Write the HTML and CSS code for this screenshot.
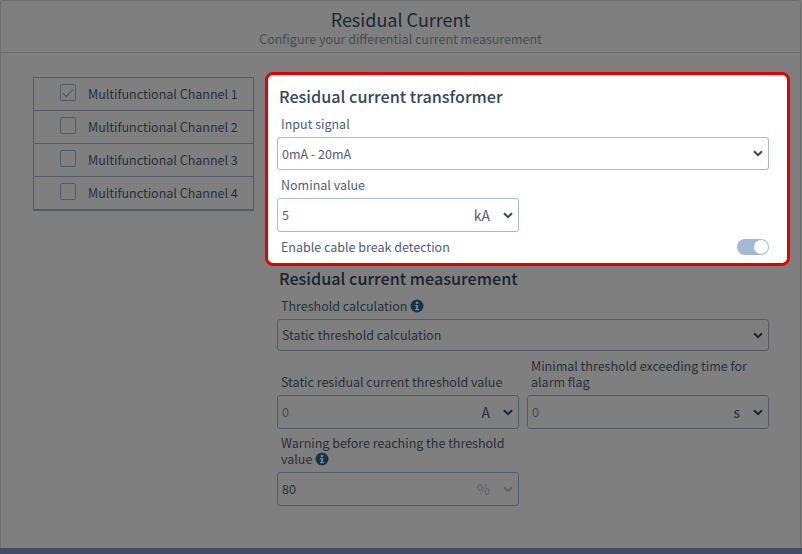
FILE: index.html
```html
<!DOCTYPE html>
<html lang="en">
<head>
<meta charset="utf-8">
<title>Residual Current</title>
<link rel="stylesheet" href="styles.css">
</head>
<body>
<div class="page">
  <div class="panel">
    <header class="head">
      <h1 class="head-title">Residual Current</h1>
      <p class="head-sub">Configure your differential current measurement</p>
    </header>
    <div class="body">
      <ul class="channels">
        <li class="channel"><span class="check"><svg viewBox="0 0 16 16" width="14" height="14"><path d="M2.5 8.5 6.2 12 13.5 4" fill="none" stroke="#8fa6c0" stroke-width="1.2"/></svg></span>Multifunctional Channel 1</li>
        <li class="channel"><span class="check"></span>Multifunctional Channel 2</li>
        <li class="channel"><span class="check"></span>Multifunctional Channel 3</li>
        <li class="channel"><span class="check"></span>Multifunctional Channel 4</li>
      </ul>
      <div class="forms">
        <section class="card">
          <h2 class="sec-title">Residual current transformer</h2>
          <label class="lab lab-first">Input signal</label>
          <div class="field f-33"><span class="val">0mA - 20mA</span><svg class="chev" viewBox="0 0 10 7" width="10" height="7"><path d="M1 1.2 5 5.2 9 1.2" fill="none" stroke="#34485f" stroke-width="2"/></svg></div>
          <label class="lab lab-gap">Nominal value</label>
          <div class="field half f-34"><span class="val">5</span><span class="unit">kA</span><svg class="chev" viewBox="0 0 10 7" width="10" height="7"><path d="M1 1.2 5 5.2 9 1.2" fill="none" stroke="#34485f" stroke-width="2"/></svg></div>
          <div class="switch-row"><span class="lab-inline">Enable cable break detection</span><span class="toggle"><span class="knob"></span></span></div>
        </section>
        <section class="plain">
          <h2 class="sec-title">Residual current measurement</h2>
          <label class="lab lab-first">Threshold calculation <svg class="info" viewBox="0 0 14 14" width="14" height="14"><circle cx="7" cy="7" r="6.5" fill="#2f6496"/><rect x="5.8" y="2.8" width="2.4" height="2.2" fill="#fff"/><path d="M5 6h3.1v4h1v1.3H5V10h1V7.3H5z" fill="#fff"/></svg></label>
          <div class="field f-32"><span class="val">Static threshold calculation</span><svg class="chev" viewBox="0 0 10 7" width="10" height="7"><path d="M1 1.2 5 5.2 9 1.2" fill="none" stroke="#34485f" stroke-width="2"/></svg></div>
          <div class="cols">
            <div class="col">
              <label class="lab">Static residual current threshold value</label>
              <div class="field f-34"><span class="val faint">0</span><span class="unit">A</span><svg class="chev" viewBox="0 0 10 7" width="10" height="7"><path d="M1 1.2 5 5.2 9 1.2" fill="none" stroke="#34485f" stroke-width="2"/></svg></div>
            </div>
            <div class="col">
              <label class="lab">Minimal threshold exceeding time for alarm flag</label>
              <div class="field f-34"><span class="val faint">0</span><span class="unit">s</span><svg class="chev" viewBox="0 0 10 7" width="10" height="7"><path d="M1 1.2 5 5.2 9 1.2" fill="none" stroke="#34485f" stroke-width="2"/></svg></div>
            </div>
          </div>
          <div class="cols cols-last">
            <div class="col">
              <label class="lab">Warning before reaching the threshold value <svg class="info" viewBox="0 0 14 14" width="14" height="14"><circle cx="7" cy="7" r="6.5" fill="#2f6496"/><rect x="5.8" y="2.8" width="2.4" height="2.2" fill="#fff"/><path d="M5 6h3.1v4h1v1.3H5V10h1V7.3H5z" fill="#fff"/></svg></label>
              <div class="field f-34"><span class="val">80</span><span class="unit muted">%</span><svg class="chev" viewBox="0 0 10 7" width="10" height="7"><path d="M1 1.2 5 5.2 9 1.2" fill="none" stroke="#b9c4d0" stroke-width="2"/></svg></div>
            </div>
          </div>
        </section>
      </div>
    </div>
  </div>
  <footer class="foot"></footer>
  <div class="overlay"></div>
</div>
</body>
</html>
```
FILE: styles.css
```css
* { box-sizing: border-box; }
html, body { margin: 0; height: 100%; }
body {
  font-family: "Noto Sans CJK JP", "Noto Sans", sans-serif;
  font-size: 12.5px;
  line-height: 16px;
  color: #4f6074;
  background: #fff;
  overflow: hidden;
}
.page {
  position: relative;
  width: 802px;
  height: 554px;
  display: flex;
  flex-direction: column;
}
.panel {
  flex: 1;
  min-height: 0;
  margin-right: 1px;
  border: 1px solid #dcdcdc;
  border-bottom: 0;
  border-radius: 4px 4px 0 0;
}
.head {
  height: 52px;
  border-bottom: 1px solid #d9dfe6;
  text-align: center;
  padding-top: 8px;
}
.head-title {
  margin: 0;
  font-size: 18px;
  line-height: 21px;
  font-weight: 400;
  color: #3a5069;
}
.head-sub {
  margin: 0;
  font-size: 12.5px;
  line-height: 17px;
  color: #8d99a6;
}
.body {
  display: flex;
  align-items: flex-start;
  padding: 19px 10px 0 32px;
  gap: 11px;
}
.channels {
  list-style: none;
  margin: 5px 0 0;
  padding: 0;
  width: 221px;
  flex: none;
  border: 1px solid #a3b9d4;
  border-bottom-width: 2px;
}
.channel {
  height: 33px;
  display: flex;
  align-items: center;
  padding-left: 26px;
  gap: 12px;
  border-bottom: 1px solid #a3b9d4;
}
.channel:last-child { border-bottom: 0; height: 32px; }
.check {
  width: 16px;
  height: 17px;
  margin-top: -3px;
  border: 1px solid #a3b9d4;
  border-radius: 2px;
  display: flex;
  align-items: center;
  justify-content: center;
}
.forms { flex: 1; min-width: 0; }
.card {
  position: relative;
  z-index: 2;
  background: #fff;
  height: 194px;
  border: 3px solid #e60000;
  border-radius: 8px;
  padding: 11px 18px 0 9px;
}
.plain { padding: 2px 21px 0 12px; }
.sec-title {
  margin: 0 0 0 2px;
  font-size: 16.2px;
  line-height: 20px;
  font-weight: 500;
  color: #34485f;
}
.lab {
  display: block;
  padding-left: 4px;
  margin-bottom: 5px;
}
.lab-first { margin-top: 10px; }
.lab-gap { margin-top: 7px; }
.field {
  display: flex;
  align-items: center;
  border: 1px solid #a3b9d4;
  border-radius: 3px;
  padding: 0 5px 0 4px;
  background: #fff;
}
.half { width: 242px; }
.f-32 { height: 32px; }
.f-33 { height: 33px; }
.f-34 { height: 34px; }
.val { flex: 1; }
.faint { color: #8d99a6; }
.unit { margin-right: 13px; font-size: 14px; }
.muted { color: #b9c4d0; }
.chev { flex: none; }
.switch-row {
  display: flex;
  justify-content: space-between;
  align-items: center;
  padding-left: 4px;
  margin-top: 7px;
}
.toggle {
  width: 32px;
  height: 16px;
  border-radius: 8px;
  background: #a3b9d4;
  padding: 1px;
  display: flex;
  justify-content: flex-end;
}
.knob {
  width: 14px;
  height: 14px;
  border-radius: 50%;
  background: #fff;
}
.cols {
  display: flex;
  gap: 8px;
  align-items: flex-end;
  margin-top: 7px;
}
.cols-last { margin-top: 6px; }
.col { flex: 0 0 242px; }
.info { vertical-align: -2px; }
.foot {
  flex: none;
  height: 6px;
  background: #7e9ec6;
}
.overlay {
  position: absolute;
  inset: 0;
  z-index: 1;
  background: rgba(0, 0, 0, 0.5);
}
```
